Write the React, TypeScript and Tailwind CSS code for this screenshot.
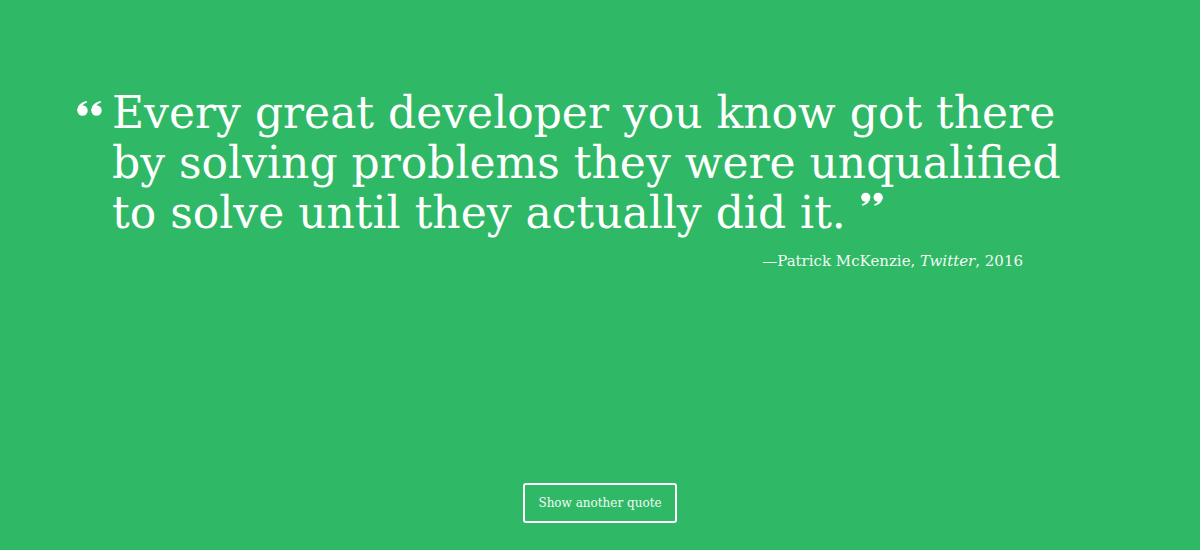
function QuoteMark({ flip = false, className = "" }: { flip?: boolean; className?: string }) {
  const mark = (
    <>
      <circle cx="5.5" cy="9.5" r="5.2" />
      <path d="M0.4 9.5 C0.6 4.5 4 1.2 9.6 0 L10.1 1.4 C6.8 2.6 4.6 4.6 4.4 7 Z" />
    </>
  );
  return (
    <svg
      viewBox="0 0 26 15"
      className={className}
      fill="currentColor"
      style={flip ? { transform: "rotate(180deg)" } : undefined}
    >
      <g>{mark}</g>
      <g transform="translate(14 0)">{mark}</g>
    </svg>
  );
}

export default function App() {
  const serif = { fontFamily: '"DejaVu Serif", "Liberation Serif", serif' };

  return (
    <div
      className="h-[550px] w-full bg-[#2fb866] text-white flex flex-col"
      style={serif}
    >
      <div className="pl-[77px] pt-[88px]">
        <div className="flex items-start">
          <QuoteMark className="w-[26px] h-[15px] mt-[13px] mr-[9px] shrink-0" />
          <blockquote className="text-[44px] leading-[50px]">
            Every great developer you know got there
            <br />
            by solving problems they were unqualified
            <br />
            to solve until they actually did it.
            <QuoteMark flip className="inline-block w-[23px] h-[14px] ml-[14px] align-[22px]" />
          </blockquote>
        </div>
        <p className="w-[946px] text-right text-[15px] mt-[12px] text-[#f2fbf4]">
          —Patrick McKenzie, <em>Twitter</em>, 2016
        </p>
      </div>
      <div className="mt-auto pb-[27px] flex justify-center">
        <button className="h-[40px] w-[154px] border-2 border-white rounded-[3px] text-[12px] text-[#f2fbf4]">
          Show another quote
        </button>
      </div>
    </div>
  );
}
